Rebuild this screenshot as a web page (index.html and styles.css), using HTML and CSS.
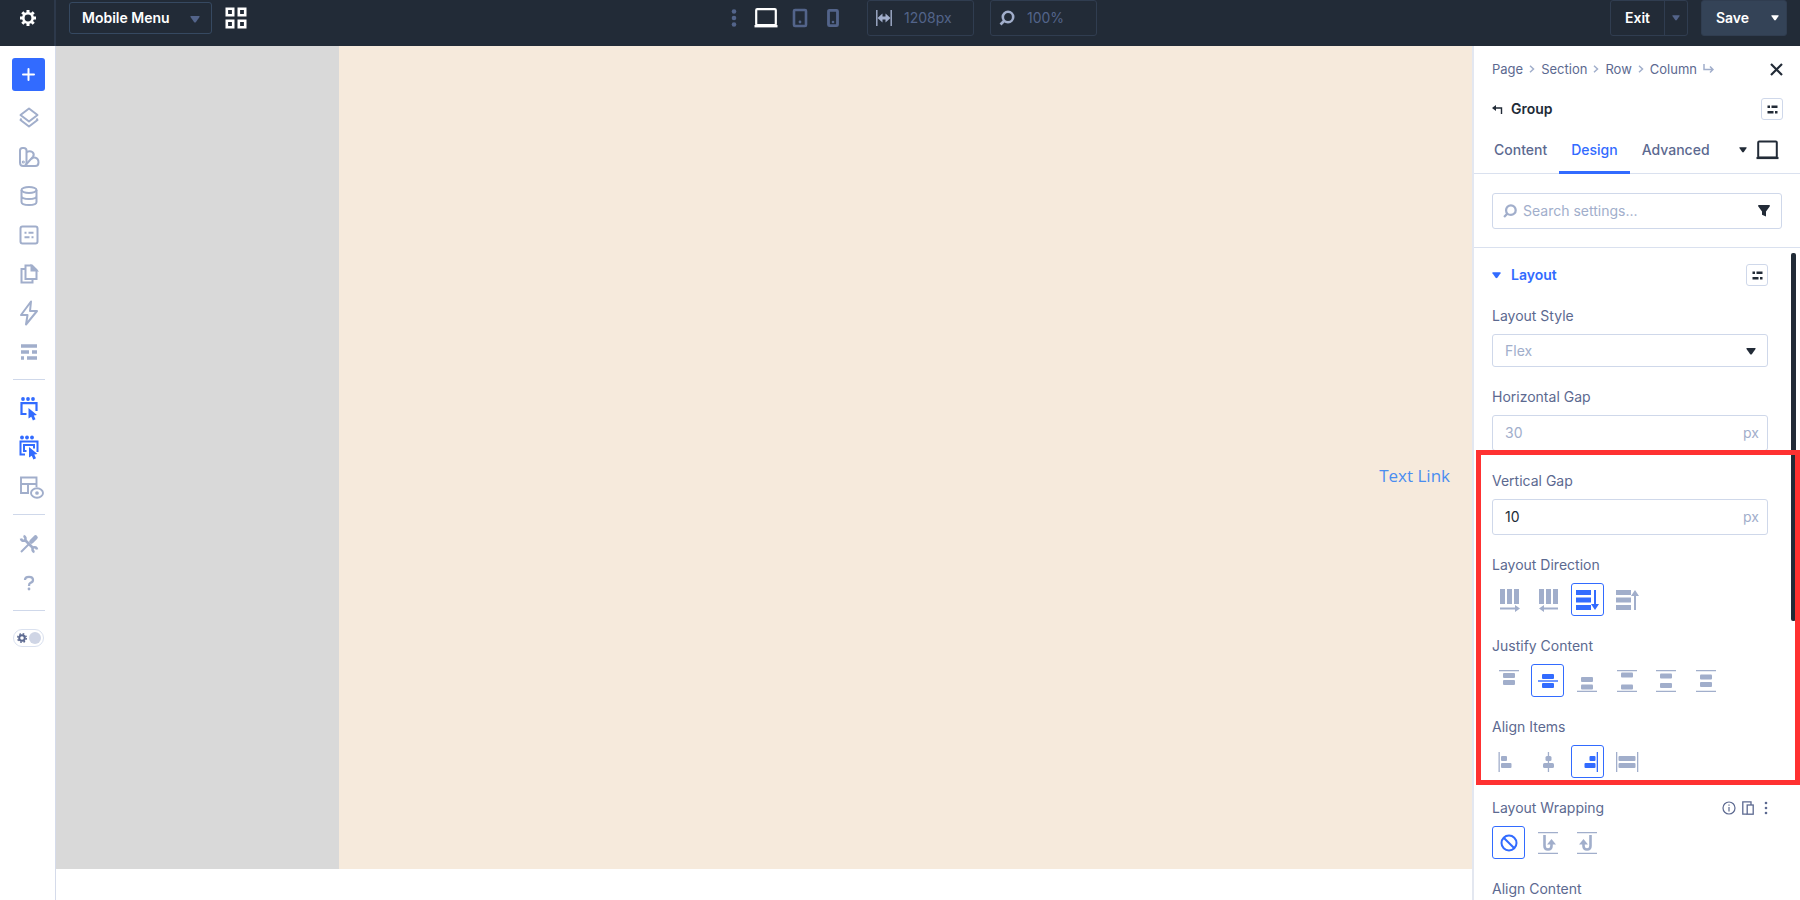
FILE: index.html
```html
<!DOCTYPE html>
<html lang="en">
<head>
    <meta charset="UTF-8">
    <meta name="viewport" content="width=device-width, initial-scale=1.0">
    <title>Mobile Menu</title>
    <link rel="stylesheet" href="styles.css">
</head>
<body>
    <header class="topbar">
        <button class="settings" aria-label="Settings">
            <svg width="18" height="18" viewBox="0 0 18 18" fill="none" stroke="currentColor"><circle cx="9" cy="9" r="4.7" stroke-width="2.6"/><path stroke-width="3" d="M9 1v3M9 14v3M1 9h3M14 9h3M3.3 3.3l2 2M12.7 12.7l2 2M14.7 3.3l-2 2M5.3 12.7l-2 2"/></svg>
        </button>
        <div class="bar">
            <div class="barleft">
                <div class="selectbox menuselect">
                    <select aria-label="Layout">
                        <option>Mobile Menu</option>
                    </select>
                    <svg class="caret" width="10" height="7" viewBox="0 0 10 7"><path fill="currentColor" d="M1 0h8q1 0 .5 1L6 6Q5 7 4 6L.5 1Q0 0 1 0z"/></svg>
                </div>
                <button class="plain white" aria-label="Grid">
                    <svg width="22" height="22" viewBox="0 0 22 22" fill="none" stroke="currentColor" stroke-width="2.6"><path d="M1.8 1.8h6.4v6.4H1.8zM13.8 1.8h6.4v6.4h-6.4zM1.8 13.8h6.4v6.4H1.8zM13.8 13.8h6.4v6.4h-6.4z"/></svg>
                </button>
            </div>
            <div class="barcenter">
                <div class="devices">
                    <button class="plain" aria-label="More">
                        <svg width="12" height="20" viewBox="0 0 12 20" fill="currentColor"><circle cx="6" cy="3.5" r="2.3"/><circle cx="6" cy="10" r="2.3"/><circle cx="6" cy="16.5" r="2.3"/></svg>
                    </button>
                    <button class="plain white" aria-label="Desktop">
                        <svg width="24" height="20" viewBox="0 0 24 20" fill="none" stroke="currentColor"><rect x="2.2" y="1.2" width="19.6" height="16" rx="1" stroke-width="2.2"/><path stroke-width="2.4" d="M.5 18.2h23"/></svg>
                    </button>
                    <button class="plain" aria-label="Tablet">
                        <svg width="16" height="20" viewBox="0 0 16 20"><rect x="2" y="2" width="12" height="16" rx="1" fill="none" stroke="currentColor" stroke-width="2.6"/><circle cx="8" cy="14" r="1.4" fill="currentColor"/></svg>
                    </button>
                    <button class="plain" aria-label="Phone">
                        <svg width="22" height="20" viewBox="0 0 22 20"><rect x="6.500" y="2.300" width="9" height="15.400" rx="1" fill="none" stroke="currentColor" stroke-width="2.800"/><circle cx="11" cy="14" r="1.300" fill="currentColor"/></svg>
                    </button>
                </div>
                <label class="barinput">
                    <svg width="16" height="18" viewBox="0 0 16 18"><path fill="none" stroke="currentColor" stroke-width="1.4" d="M.8 1v16M15.2 1v16"/><path fill="currentColor" d="M1.500 9l5-4.500v3h3v-3l5 4.500-5 4.500v-3h-3v3z"/></svg>
                    <input type="text" value="1208px" aria-label="Width">
                </label>
                <label class="barinput">
                    <svg width="16" height="16" viewBox="0 0 16 16" fill="none" stroke="currentColor" stroke-width="2.6"><circle cx="9" cy="7" r="5.2"/><path d="M5.500 10.500L1.500 14.500"/></svg>
                    <input type="text" value="100%" aria-label="Zoom">
                </label>
            </div>
            <div class="barright">
                <div class="splitbutton exit">
                    <button>Exit</button>
                    <button class="more" aria-label="Exit options"><svg width="8" height="6" viewBox="0 0 10 7"><path fill="currentColor" d="M1 0h8q1 0 .5 1L6 6Q5 7 4 6L.5 1Q0 0 1 0z"/></svg></button>
                </div>
                <div class="splitbutton save">
                    <button>Save</button>
                    <button class="more" aria-label="Save options"><svg width="8" height="6" viewBox="0 0 10 7"><path fill="currentColor" d="M1 0h8q1 0 .5 1L6 6Q5 7 4 6L.5 1Q0 0 1 0z"/></svg></button>
                </div>
            </div>
        </div>
    </header>
    <div class="workspace">
        <nav class="sidebar">
            <button class="add" aria-label="Add">
                <svg width="13" height="13" viewBox="0 0 13 13" fill="none" stroke="currentColor" stroke-width="2" stroke-linecap="round"><path d="M6.500 1v11M1 6.500h11"/></svg>
            </button>
            <button class="tool" aria-label="Layers">
                <svg width="22" height="22" viewBox="0 0 22 22" fill="none" stroke="currentColor" stroke-width="2" stroke-linejoin="round"><path d="M11 1.500l8.500 6.500-8.500 6.500L2.500 8z"/><path d="M3.500 11.500l-1 1.500 8.500 6.500 8.500-6.500-1-1.500"/></svg>
            </button>
            <button class="tool" aria-label="Design variables">
                <svg width="22" height="22" viewBox="0 0 22 22" fill="none" stroke="currentColor" stroke-width="2" stroke-linejoin="round"><path d="M2 4.500Q2 2 4.500 2h1.200Q8.500 2 8.500 4.500v12.200Q8.500 20 5.200 20 2 20 2 16.500z"/><path d="M8.500 6q3.500-1.500 5.800 0 2.400 2 .8 4.600L8.500 18"/><path d="M5.200 20h12q3.300 0 3.300-3.500 0-4-3-4.800-2.500-.5-4.300 1.500"/><circle cx="5.300" cy="16" r=".6"/></svg>
            </button>
            <button class="tool" aria-label="Data">
                <svg width="22" height="22" viewBox="0 0 22 22" fill="none" stroke="currentColor" stroke-width="2"><ellipse cx="11" cy="5" rx="7.500" ry="3"/><path d="M3.500 5v12c0 1.800 3.200 3 7.500 3s7.500-1.200 7.500-3V5M3.500 11c0 1.800 3.200 3 7.500 3s7.500-1.200 7.500-3"/></svg>
            </button>
            <button class="tool" aria-label="Presets">
                <svg width="22" height="22" viewBox="0 0 22 22" fill="none" stroke="currentColor" stroke-width="2"><rect x="2.500" y="2.500" width="17" height="17" rx="2"/><path d="M6.500 8.700h2M10.500 8.700h5M6.500 13.300h5M13.500 13.300h2"/></svg>
            </button>
            <button class="tool" aria-label="Pages">
                <svg width="22" height="22" viewBox="0 0 22 22" fill="none" stroke="currentColor" stroke-width="2"><path d="M7.500 2.500h6.500L18.500 7v9h-11z"/><path fill="currentColor" d="M13.500 3v4.500h5z"/><path d="M7.500 6h-4v13.500h11V16"/></svg>
            </button>
            <button class="tool" aria-label="Interactions">
                <svg width="22" height="26" viewBox="0 0 22 26" fill="none" stroke="currentColor" stroke-width="2" stroke-linejoin="round"><path d="M13 1.500L3 15h6.500L8 24.500 19 11h-7z"/></svg>
            </button>
            <button class="tool" aria-label="Wireframe">
                <svg width="22" height="22" viewBox="0 0 22 22" fill="none" stroke="currentColor" stroke-width="3.400"><path d="M3 5h16M3 11h8M14 11h5M3 17h3M9 17h10"/></svg>
            </button>
            <hr>
            <button class="tool active" aria-label="Select module">
                <svg width="22" height="26" viewBox="0 0 22 26"><g fill="currentColor"><circle cx="5" cy="3" r="1.900"/><circle cx="10" cy="3" r="1.900"/><circle cx="15" cy="3" r="1.900"/><path d="M10.500 12l8.500 7-3.200.6 1.700 3.600-2.600 1.200-1.600-3.600-2.800 1.700z"/></g><path fill="none" stroke="currentColor" stroke-width="2.200" d="M8.500 18H3.500V7.200h15V15"/></svg>
            </button>
            <button class="tool active" aria-label="Select parent">
                <svg width="22" height="26" viewBox="0 0 22 26"><g fill="currentColor"><circle cx="4" cy="2.500" r="1.900"/><circle cx="9" cy="2.500" r="1.900"/><circle cx="14" cy="2.500" r="1.900"/><path d="M11 12l8.500 7-3.200.6 1.700 3.600-2.600 1.200-1.600-3.600-2.800 1.700z"/></g><path fill="none" stroke="currentColor" stroke-width="2" d="M7 19.500H2.500V6.500h17V17M8.500 16H6v-6h10v3.500"/></svg>
            </button>
            <button class="tool" aria-label="Preview layout">
                <svg width="22" height="24" viewBox="0 0 22 24" overflow="visible" fill="none" stroke="currentColor" stroke-width="1.900"><path d="M11 18H3V2.500h15.500V12M3 9h15.500M10 9v9"/><ellipse cx="19" cy="18" rx="6" ry="4.700" fill="#fff"/><circle cx="19" cy="18" r=".9"/></svg>
            </button>
            <hr>
            <button class="tool" aria-label="Tools">
                <svg width="20" height="20" viewBox="0 0 20 20" fill="none" stroke="currentColor"><path stroke-width="2" d="M2 18L11 9"/><path stroke-width="4.500" stroke-linecap="round" d="M12.500 7.500l4-4"/><path stroke-width="2.600" d="M6 6l8 8"/><path stroke-width="2.600" d="M2 4.500Q2.500 7.500 6 6.500 7.500 3 4.500 2M18 15.500Q17.500 12.500 14 13.500 12.500 17 15.500 18"/></svg>
            </button>
            <button class="tool" aria-label="Help">
                <svg width="20" height="20" viewBox="0 0 20 20"><path fill="none" stroke="currentColor" stroke-width="2.300" d="M6 7Q6 3.800 10 3.800T14 7Q14 9 11.500 9.800 10 10.400 10 13"/><circle cx="10" cy="16" r="1.400" fill="currentColor"/></svg>
            </button>
            <hr>
            <button class="theme" aria-label="Dark mode">
                <svg width="10" height="10" viewBox="0 0 10 10" fill="none" stroke="currentColor"><circle cx="5" cy="5" r="2.800" stroke-width="2"/><circle cx="5" cy="5" r="4.300" stroke-width="1.400" stroke-dasharray="1.700 1.700"/></svg>
                <span class="knob"></span>
            </button>
        </nav>
        <main class="canvas">
            <div class="page">
                <div class="shade"></div>
                <div class="group">
                    <a href="#">Text Link</a>
                </div>
            </div>
        </main>
        <aside class="panel">
            <div class="panelhead">
                <div class="row">
                    <div class="crumbs">
                        <a href="#">Page</a>
                        <svg width="6" height="8" viewBox="0 0 6 8"><path d="M1 .8L4.500 4 1 7.200"/></svg>
                        <a href="#">Section</a>
                        <svg width="6" height="8" viewBox="0 0 6 8"><path d="M1 .8L4.500 4 1 7.200"/></svg>
                        <a href="#">Row</a>
                        <svg width="6" height="8" viewBox="0 0 6 8"><path d="M1 .8L4.500 4 1 7.200"/></svg>
                        <a href="#">Column</a>
                        <svg class="enter" width="11" height="10" viewBox="0 0 11 10"><path d="M1 0v5.500h8.500M7 2.500l3 3-3 3"/></svg>
                    </div>
                    <button class="plain dark" aria-label="Close">
                        <svg width="13" height="13" viewBox="0 0 13 13" fill="none" stroke="currentColor" stroke-width="2.200"><path d="M1 1l11 11M12 1L1 12"/></svg>
                    </button>
                </div>
                <div class="row title">
                    <h2>
                        <svg width="11" height="11" viewBox="0 0 11 11"><path fill="none" stroke="currentColor" stroke-width="1.400" d="M2 4h7.500v6"/><path fill="currentColor" d="M0 4l4-3v6z"/></svg>
                        Group
                    </h2>
                    <button class="preset" aria-label="Group presets"><svg width="11" height="9" viewBox="0 0 11 9"><path d="M.5 1.800h2.500M4.500 1.800h6M.5 7.200h6M8 7.200h2.500"/></svg></button>
                </div>
            </div>
            <div class="tabs">
                <button>Content</button>
                <button class="current">Design</button>
                <button>Advanced</button>
                <button class="view" aria-label="Responsive view">
                    <svg width="8" height="6" viewBox="0 0 10 7"><path fill="currentColor" d="M1 0h8q1 0 .5 1L6 6Q5 7 4 6L.5 1Q0 0 1 0z"/></svg>
                    <svg width="23" height="20" viewBox="0 0 23 20" fill="none" stroke="currentColor"><rect x="2.200" y="1.500" width="18.600" height="16" rx="1" stroke-width="2"/><path stroke-width="2.200" d="M.5 18h22"/></svg>
                </button>
            </div>
            <div class="searchrow">
                <label class="search">
                    <svg width="14" height="14" viewBox="0 0 16 16" fill="none" stroke="currentColor" stroke-width="2.600"><circle cx="9" cy="7" r="5.500"/><path d="M5 11L1.200 14.800"/></svg>
                    <input type="text" placeholder="Search settings..." aria-label="Search settings">
                    <button class="plain dark" aria-label="Filter"><svg width="12" height="12" viewBox="0 0 12 12"><path fill="currentColor" d="M.5 0h11q.8.800 0 1.800L8 6.500v5L4 9.800V6.500L.5 1.800Q-.3.800.5 0z"/></svg></button>
                </label>
            </div>
            <div class="options">
                <div class="scrollthumb"></div>
                <div class="row sectionhead">
                    <h3>
                        <svg width="9" height="7" viewBox="0 0 10 7"><path fill="currentColor" d="M1 0h8q1 0 .5 1L6 6Q5 7 4 6L.5 1Q0 0 1 0z"/></svg>
                        Layout
                    </h3>
                    <button class="preset" aria-label="Layout presets"><svg width="11" height="9" viewBox="0 0 11 9"><path d="M.5 1.800h2.500M4.500 1.800h6M.5 7.200h6M8 7.200h2.500"/></svg></button>
                </div>
                <div class="field">
                    <label for="style">Layout Style</label>
                    <div class="selectbox">
                        <select id="style">
                            <option>Flex</option>
                        </select>
                        <svg class="caret" width="10" height="7" viewBox="0 0 10 7"><path fill="currentColor" d="M1 0h8q1 0 .5 1L6 6Q5 7 4 6L.5 1Q0 0 1 0z"/></svg>
                    </div>
                </div>
                <div class="field">
                    <label for="hgap">Horizontal Gap</label>
                    <div class="unitbox">
                        <input type="text" id="hgap" placeholder="30">
                        <span>px</span>
                    </div>
                </div>
                <div class="highlight">
                    <div class="field">
                        <label for="vgap">Vertical Gap</label>
                        <div class="unitbox">
                            <input type="text" id="vgap" value="10">
                            <span>px</span>
                        </div>
                    </div>
                    <div class="field">
                        <span class="label" id="direction">Layout Direction</span>
                        <div class="choices" role="group" aria-labelledby="direction">
                            <button aria-label="Row"><svg width="24" height="24" viewBox="0 0 24 24"><path d="M3 1h5v15H3zM10 1h5v15h-5zM17 1h5v15h-5zM3 19.500h15v-2.500l5 3.500-5 3.500v-2.500H3z"/></svg></button>
                            <button aria-label="Row reverse"><svg width="24" height="24" viewBox="0 0 24 24"><path d="M3 1h5v15H3zM10 1h5v15h-5zM17 1h5v15h-5zM22 19.500H8v-2.500l-5 3.500 5 3.500v-2.500h14z"/></svg></button>
                            <button class="on" aria-label="Column"><svg width="24" height="24" viewBox="0 0 24 24"><path d="M1 2h15v5H1zM1 9.500h15v5H1zM1 17h15v5H1zM19 2h2v14h3l-4 6-4-6h3z"/></svg></button>
                            <button aria-label="Column reverse"><svg width="24" height="24" viewBox="0 0 24 24"><path d="M1 2h15v5H1zM1 9.500h15v5H1zM1 17h15v5H1zM19 22h2V8h3l-4-6-4 6h3z"/></svg></button>
                        </div>
                    </div>
                    <div class="field">
                        <span class="label" id="justify">Justify Content</span>
                        <div class="choices" role="group" aria-labelledby="justify">
                            <button aria-label="Start"><svg width="24" height="24" viewBox="0 0 24 24"><path d="M2 1h20v1.300H2z"/><rect x="6" y="4" width="12" height="5" rx="1"/><rect x="6" y="11" width="12" height="5" rx="1"/></svg></button>
                            <button class="on" aria-label="Center"><svg width="24" height="24" viewBox="0 0 24 24"><path d="M2 11.300h20v1.400H2z"/><rect x="6" y="5" width="12" height="5" rx="1"/><rect x="6" y="14" width="12" height="5" rx="1"/></svg></button>
                            <button aria-label="End"><svg width="24" height="24" viewBox="0 0 24 24"><path d="M2 21.700h20V23H2z"/><rect x="6" y="8" width="12" height="5" rx="1"/><rect x="6" y="15.500" width="12" height="5" rx="1"/></svg></button>
                            <button aria-label="Space between"><svg width="24" height="24" viewBox="0 0 24 24"><path d="M2 1h20v1.300H2zM2 21.700h20V23H2z"/><rect x="6" y="3.500" width="12" height="5" rx="1"/><rect x="6" y="15.500" width="12" height="5" rx="1"/></svg></button>
                            <button aria-label="Space around"><svg width="24" height="24" viewBox="0 0 24 24"><path d="M2 1h20v1.300H2zM2 21.700h20V23H2z"/><rect x="6" y="4.500" width="12" height="5" rx="1"/><rect x="6" y="14" width="12" height="5" rx="1"/></svg></button>
                            <button aria-label="Space evenly"><svg width="24" height="24" viewBox="0 0 24 24"><path d="M2 1h20v1.300H2zM2 21.700h20V23H2z"/><rect x="6" y="5.500" width="12" height="5" rx="1"/><rect x="6" y="13" width="12" height="5" rx="1"/></svg></button>
                        </div>
                    </div>
                    <div class="field">
                        <span class="label" id="align">Align Items</span>
                        <div class="choices" role="group" aria-labelledby="align">
                            <button aria-label="Start"><svg width="24" height="24" viewBox="0 0 24 24"><path d="M1.500 2h1.300v20H1.500z"/><rect x="4" y="6" width="6" height="5" rx="1"/><rect x="4" y="13" width="10.500" height="5" rx="1"/></svg></button>
                            <button aria-label="Center"><svg width="24" height="24" viewBox="0 0 24 24"><path d="M11.800 2h1.300v20h-1.300z"/><rect x="9.500" y="6" width="6" height="5" rx="1.500"/><rect x="7" y="13" width="11" height="5" rx="1.500"/></svg></button>
                            <button class="on" aria-label="End"><svg width="24" height="24" viewBox="0 0 24 24"><path d="M21.700 2H23v20h-1.300z"/><rect x="14.500" y="6" width="6" height="5" rx="1"/><rect x="9.500" y="13" width="11" height="5" rx="1"/></svg></button>
                            <button aria-label="Stretch"><svg width="24" height="24" viewBox="0 0 24 24"><path d="M1 2h1.300v20H1zM22 2h1.300v20H22z"/><rect x="3.500" y="6" width="17" height="5" rx="1"/><rect x="3.500" y="13" width="17" height="5" rx="1"/></svg></button>
                        </div>
                    </div>
                </div>
                <div class="field">
                    <div class="row">
                        <span class="label" id="wrapping">Layout Wrapping</span>
                        <div class="actions">
                            <button class="plain" aria-label="Info"><svg width="14" height="14" viewBox="0 0 14 14" fill="none" stroke="currentColor" stroke-width="1.200"><circle cx="7" cy="7" r="6"/><path d="M7 6v4.500M7 3.500v1.300"/></svg></button>
                            <button class="plain" aria-label="Responsive"><svg width="12" height="14" viewBox="0 0 12 14" fill="none" stroke="currentColor" stroke-width="1.300"><path d="M9 4V.8H.8v12.400H5"/><rect x="5.200" y="4" width="6" height="9.200"/></svg></button>
                            <button class="plain" aria-label="More"><svg width="8" height="14" viewBox="0 0 8 14" fill="currentColor"><circle cx="6" cy="2" r="1.300"/><circle cx="6" cy="7" r="1.300"/><circle cx="6" cy="12" r="1.300"/></svg></button>
                        </div>
                    </div>
                    <div class="choices" role="group" aria-labelledby="wrapping">
                        <button class="on" aria-label="No wrap"><svg width="24" height="24" viewBox="0 0 24 24" fill="none" stroke="currentColor" stroke-width="2"><circle cx="12" cy="12" r="7.500"/><path d="M6.700 6.700l10.600 10.600"/></svg></button>
                        <button aria-label="Wrap"><svg width="24" height="24" viewBox="0 0 24 24"><path d="M2 1h20v1.300H2zM2 21.700h20V23H2z"/><path fill="none" stroke="currentColor" stroke-width="2.600" d="M8.500 4v11Q8.500 18.500 12 18.500T15.500 15v-2"/><path d="M15.500 8l4.500 5.500h-9z"/></svg></button>
                        <button aria-label="Wrap reverse"><svg width="24" height="24" viewBox="0 0 24 24"><path d="M2 1h20v1.300H2zM2 21.700h20V23H2z"/><path fill="none" stroke="currentColor" stroke-width="2.600" d="M15.500 4v11Q15.500 18.500 12 18.500T8.500 15v-2"/><path d="M8.500 8L4 13.500h9z"/></svg></button>
                    </div>
                </div>
                <div class="field">
                    <span class="label">Align Content</span>
                </div>
            </div>
        </aside>
    </div>
</body>
</html>
```

FILE: styles.css
```css
* {
    box-sizing: border-box;
}
body {
    margin: 0;
    height: 100vh;
    display: flex;
    flex-direction: column;
    overflow: hidden;
    font-family: Inter, "Liberation Sans", sans-serif;
    font-size: 14px;
    line-height: 20px;
    color: #5c6990;
    background-color: #fff;
}
button, input, select {
    font: inherit;
    color: inherit;
    margin: 0;
    padding: 0;
    border: none;
    outline: none;
    background-color: transparent;
}
button {
    cursor: pointer;
}
svg {
    display: block;
    flex: none;
}
a {
    color: inherit;
    text-decoration: none;
}
h2, h3 {
    display: flex;
    align-items: center;
    margin: 0;
    font-size: 14px;
    font-weight: 600;
}
.plain {
    display: flex;
}
.white {
    color: #fff;
}
.dark {
    color: #222b37;
}
.row {
    display: flex;
    align-items: center;
    justify-content: space-between;
}

/* top bar */
.topbar {
    display: flex;
    flex: none;
    height: 46px;
    background-color: #222b37;
    color: #53648a;
}
.settings {
    display: flex;
    justify-content: center;
    width: 56px;
    padding: 9px 0 0 2px;
    border-right: 2px solid #2d394b;
    color: #fff;
}
.bar {
    flex: 1;
    display: grid;
    grid-template-columns: 1fr auto 1fr;
    padding: 0 13px 10px;
}
.barleft, .barcenter, .barright, .devices {
    display: flex;
    align-items: center;
}
.barleft {
    gap: 13px;
}
.barcenter {
    gap: 16px;
    padding-right: 31px;
}
.devices {
    gap: 14px;
    margin-right: 7px;
}
.barright {
    justify-content: flex-end;
    gap: 13px;
}
.selectbox {
    position: relative;
    border: 1px solid #cfd8ea;
    border-radius: 3px;
}
.selectbox select {
    width: 100%;
    height: 31px;
    padding: 0 30px 0 12px;
    appearance: none;
    color: #a1aecb;
}
.selectbox .caret {
    position: absolute;
    right: 11px;
    top: 13px;
    color: #222b37;
    pointer-events: none;
}
.menuselect {
    width: 143px;
    border-color: #364961;
}
.menuselect select {
    height: 30px;
    color: #fff;
    font-weight: 600;
}
.menuselect .caret {
    color: #53648a;
}
.barinput {
    display: flex;
    align-items: center;
    gap: 12px;
    width: 107px;
    height: 36px;
    padding-left: 8px;
    border: 1px solid #303d50;
    border-radius: 3px;
    color: #a1aecb;
}
.barinput input {
    width: 60px;
    color: #53648a;
}
.splitbutton {
    display: flex;
    height: 36px;
    border: 1px solid #303d50;
    border-radius: 3px;
    color: #fff;
    font-weight: 600;
}
.exit button {
    width: 53px;
}
.splitbutton .more {
    display: flex;
    align-items: center;
    justify-content: center;
    width: 23px;
}
.exit .more {
    border-left: 1px solid #303d50;
    color: #53648a;
}
.save {
    background-color: #344357;
}
.save button {
    width: 61px;
}

/* left tools */
.workspace {
    flex: 1;
    display: flex;
    min-height: 0;
}
.sidebar {
    display: flex;
    flex: none;
    flex-direction: column;
    align-items: center;
    width: 56px;
    padding: 12px 0 0 2px;
    border-right: 1px solid #d5dbea;
    color: #a1aecb;
}
.add {
    display: flex;
    align-items: center;
    justify-content: center;
    width: 33px;
    height: 33px;
    margin-bottom: 7px;
    border-radius: 3px;
    background-color: #326bff;
    color: #fff;
}
.tool {
    display: flex;
    align-items: center;
    justify-content: center;
    width: 39px;
    height: 39px;
}
.tool.active {
    color: #326bff;
}
.sidebar hr {
    width: 32px;
    margin: 8px 0 9px;
    border: none;
    border-top: 1px solid #cfd8ea;
}
.theme {
    display: flex;
    align-items: center;
    justify-content: space-between;
    width: 31px;
    height: 18px;
    margin-top: 9px;
    padding: 0 2px 0 3px;
    border: 1px solid #dae1ef;
    border-radius: 9px;
    color: #5c6990;
}
.knob {
    width: 12px;
    height: 12px;
    border-radius: 50%;
    background-color: #cfd5e5;
}

/* canvas */
.canvas {
    flex: 1;
    display: flex;
    padding-bottom: 31px;
}
.page {
    flex: 1;
    display: flex;
}
.shade {
    width: 20%;
    background-color: #d9d9d9;
}
.group {
    flex: 1;
    display: flex;
    align-items: center;
    justify-content: flex-end;
    padding: 36px 22px 0 0;
    background-color: #f6eadc;
    font-family: "Open Sans", sans-serif;
    font-size: 17px;
    color: #4a8df0;
}

/* settings panel */
.panel {
    display: flex;
    flex: none;
    flex-direction: column;
    width: 328px;
    border-left: 2px solid #e3e7f0;
}
.panelhead {
    padding: 13px 17px 0 18px;
}
.crumbs {
    display: flex;
    align-items: center;
    gap: 6px;
    font-size: 13px;
}
.crumbs svg {
    fill: none;
    stroke: #a1aecb;
    stroke-width: 1.5;
}
.title {
    height: 22px;
    margin-top: 19px;
    color: #222b37;
}
h2 {
    gap: 8px;
}
h3 {
    gap: 10px;
    color: #326bff;
}
.preset {
    display: flex;
    align-items: center;
    justify-content: center;
    width: 22px;
    height: 22px;
    border: 1px solid #cfd8ea;
    border-radius: 3px;
}
.preset path {
    fill: none;
    stroke: #222b37;
    stroke-width: 2.4;
}
.tabs {
    display: flex;
    padding: 0 21px 0 8px;
    border-bottom: 1px solid #dae1ef;
    font-weight: 500;
}
.tabs button {
    height: 54px;
    padding: 8px 12px 0;
    border-bottom: 3px solid transparent;
    margin-bottom: -1px;
}
.tabs .current {
    border-color: #326bff;
    color: #326bff;
}
.tabs .view {
    display: flex;
    align-items: center;
    gap: 9px;
    margin-left: auto;
    padding-right: 0;
    color: #222b37;
}
.searchrow {
    padding: 19px 18px 18px;
    border-bottom: 1px solid #dae1ef;
}
.search {
    display: flex;
    align-items: center;
    gap: 6px;
    height: 36px;
    padding: 0 11px 0 10px;
    border: 1px solid #cfd8ea;
    border-radius: 3px;
    color: #a1aecb;
}
.search input {
    flex: 1;
    min-width: 0;
}
input::placeholder {
    color: #a1aecb;
    opacity: 1;
}
.options {
    flex: 1;
    min-height: 0;
    position: relative;
    overflow: hidden;
    padding: 16px 32px 0 18px;
}
.scrollthumb {
    position: absolute;
    top: 5px;
    right: 4px;
    width: 5px;
    height: 368px;
    border-radius: 2px;
    background-color: #222b37;
}
.sectionhead {
    margin-bottom: 20px;
}
.field {
    margin-bottom: 20px;
}
.field > label, .label {
    display: block;
}
.selectbox, .unitbox, .choices {
    margin-top: 8px;
}
.menuselect {
    margin-top: 0;
}
.unitbox {
    display: flex;
    align-items: center;
    height: 36px;
    padding: 0 8px 0 12px;
    border: 1px solid #cfd8ea;
    border-radius: 3px;
    color: #a1aecb;
}
.unitbox input {
    flex: 1;
    min-width: 0;
    color: #222b37;
}
.choices {
    display: grid;
    grid-template-columns: repeat(7, 1fr);
}
.choices button {
    display: flex;
    align-items: center;
    justify-content: center;
    width: 33px;
    height: 33px;
    border: 1px solid transparent;
    border-radius: 3px;
    color: #a1aecb;
    fill: currentColor;
}
.choices .on {
    border-color: #326bff;
    color: #326bff;
}
.actions {
    display: flex;
    align-items: center;
    gap: 6px;
}
/* red frame around the settings to change */
.highlight {
    position: relative;
}
.highlight::after {
    content: "";
    position: absolute;
    inset: -21px -32px -7px -16px;
    border: 5px solid #ff3131;
    pointer-events: none;
}
```
